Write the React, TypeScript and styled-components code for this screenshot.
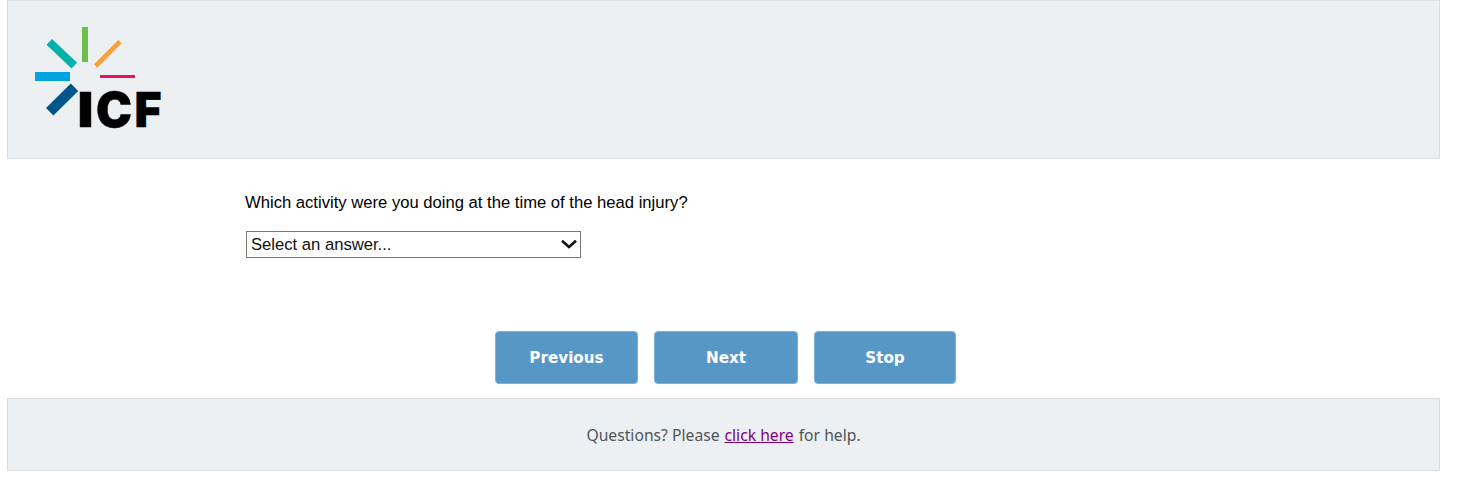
import React from "react";
import styled, { createGlobalStyle } from "styled-components";

const Global = createGlobalStyle`
  html, body { margin: 0; padding: 0; background: #fff; }
  body { font-family: "Liberation Sans", Arial, sans-serif; }
`;

const Page = styled.div`
  width: 1433px;
  margin-left: 7px;
  display: flex;
  flex-direction: column;
`;

const Header = styled.header`
  box-sizing: border-box;
  height: 159px;
  background: #ecf0f3;
  border: 1px solid #d9dde0;
  border-top-color: #e0e3e6;
  padding: 25px 0 0 26px;
`;

const Logo = styled.svg`
  display: block;
  width: 140px;
  height: 120px;
`;

const LogoLetter = styled.text`
  font-family: Inter, "Liberation Sans", sans-serif;
  font-weight: 900;
  font-size: 48px;
  fill: #000;
  stroke: #000;
  stroke-width: 0.5px;
`;

const Main = styled.main`
  height: 171px;
  padding: 34px 0 0 238px;
  box-sizing: border-box;
`;

const Question = styled.div`
  font-size: 16.64px;
  line-height: 20px;
  color: #000;
  margin-bottom: 18px;
`;

const SelectWrap = styled.div`
  position: relative;
  width: 335px;
  height: 27px;
  margin-left: 1px;
`;

const AnswerSelect = styled.select`
  appearance: none;
  box-sizing: border-box;
  width: 100%;
  height: 100%;
  background: #fff;
  border: 1px solid #767676;
  border-radius: 0;
  padding: 0 0 0 4px;
  font-family: "Liberation Sans", Arial, sans-serif;
  font-size: 16.64px;
  color: #111;
`;

const Chevron = styled.svg`
  position: absolute;
  right: 4px;
  top: 8px;
  width: 16px;
  height: 10px;
  pointer-events: none;
`;

const Buttons = styled.div`
  display: flex;
  gap: 16px;
  margin-left: 488px;
  height: 68px;
  box-sizing: border-box;
  padding-top: 1px;
`;

const NavButton = styled.button<{ $w: number }>`
  box-sizing: border-box;
  width: ${(p) => p.$w}px;
  height: 53px;
  background: #5797c8;
  border: 1px solid #7fb0d6;
  border-radius: 4px;
  color: #fff;
  font-family: "DejaVu Sans", Verdana, sans-serif;
  font-weight: 700;
  font-size: 15.2px;
  padding: 0;
`;

const Footer = styled.footer`
  box-sizing: border-box;
  height: 73px;
  background: #ecf0f3;
  border: 1px solid #d9dde0;
  display: flex;
  align-items: center;
  justify-content: center;
  font-family: "Noto Sans", Tahoma, sans-serif;
  font-size: 15.7px;
  color: #505558;
`;

const HelpLink = styled.a`
  color: #800080;
  text-decoration: underline;
  margin: 0 5px;
`;

export default function App() {
  return (
    <>
      <Global />
      <Page>
        <Header>
          <Logo viewBox="0 0 140 120" aria-label="ICF">
            <g fill="none">
              <line x1="51" y1="1" x2="51" y2="36" stroke="#6cc04a" strokeWidth="6" />
              <line x1="15.3" y1="15.8" x2="40.3" y2="39.7" stroke="#00b2a9" strokeWidth="8" />
              <line x1="86" y1="15.7" x2="61.7" y2="40" stroke="#f7a13a" strokeWidth="4.7" />
              <line x1="1" y1="50.5" x2="36" y2="50.5" stroke="#00a3e0" strokeWidth="9" />
              <line x1="66" y1="50.5" x2="101" y2="50.5" stroke="#ec0f63" strokeWidth="3" />
              <line x1="40.5" y1="61.3" x2="15.7" y2="85.8" stroke="#00558c" strokeWidth="10.5" />
            </g>
            <LogoLetter x="43.5" y="101" textLength="16" lengthAdjust="spacingAndGlyphs">I</LogoLetter>
            <LogoLetter x="62" y="101" textLength="36" lengthAdjust="spacingAndGlyphs">C</LogoLetter>
            <LogoLetter x="100.5" y="101" textLength="27" lengthAdjust="spacingAndGlyphs">F</LogoLetter>
          </Logo>
        </Header>
        <Main>
          <Question>Which activity were you doing at the time of the head injury?</Question>
          <SelectWrap>
            <AnswerSelect defaultValue="">
              <option value="">Select an answer...</option>
            </AnswerSelect>
            <Chevron viewBox="0 0 16 10">
              <path d="M1 1.7 L8 8 L15 1.7" fill="none" stroke="#111" strokeWidth="2.6" />
            </Chevron>
          </SelectWrap>
        </Main>
        <Buttons>
          <NavButton $w={143}>Previous</NavButton>
          <NavButton $w={144}>Next</NavButton>
          <NavButton $w={142}>Stop</NavButton>
        </Buttons>
        <Footer>
          <span>Questions? Please</span>
          <HelpLink href="#">click here</HelpLink>
          <span>for help.</span>
        </Footer>
      </Page>
    </>
  );
}
